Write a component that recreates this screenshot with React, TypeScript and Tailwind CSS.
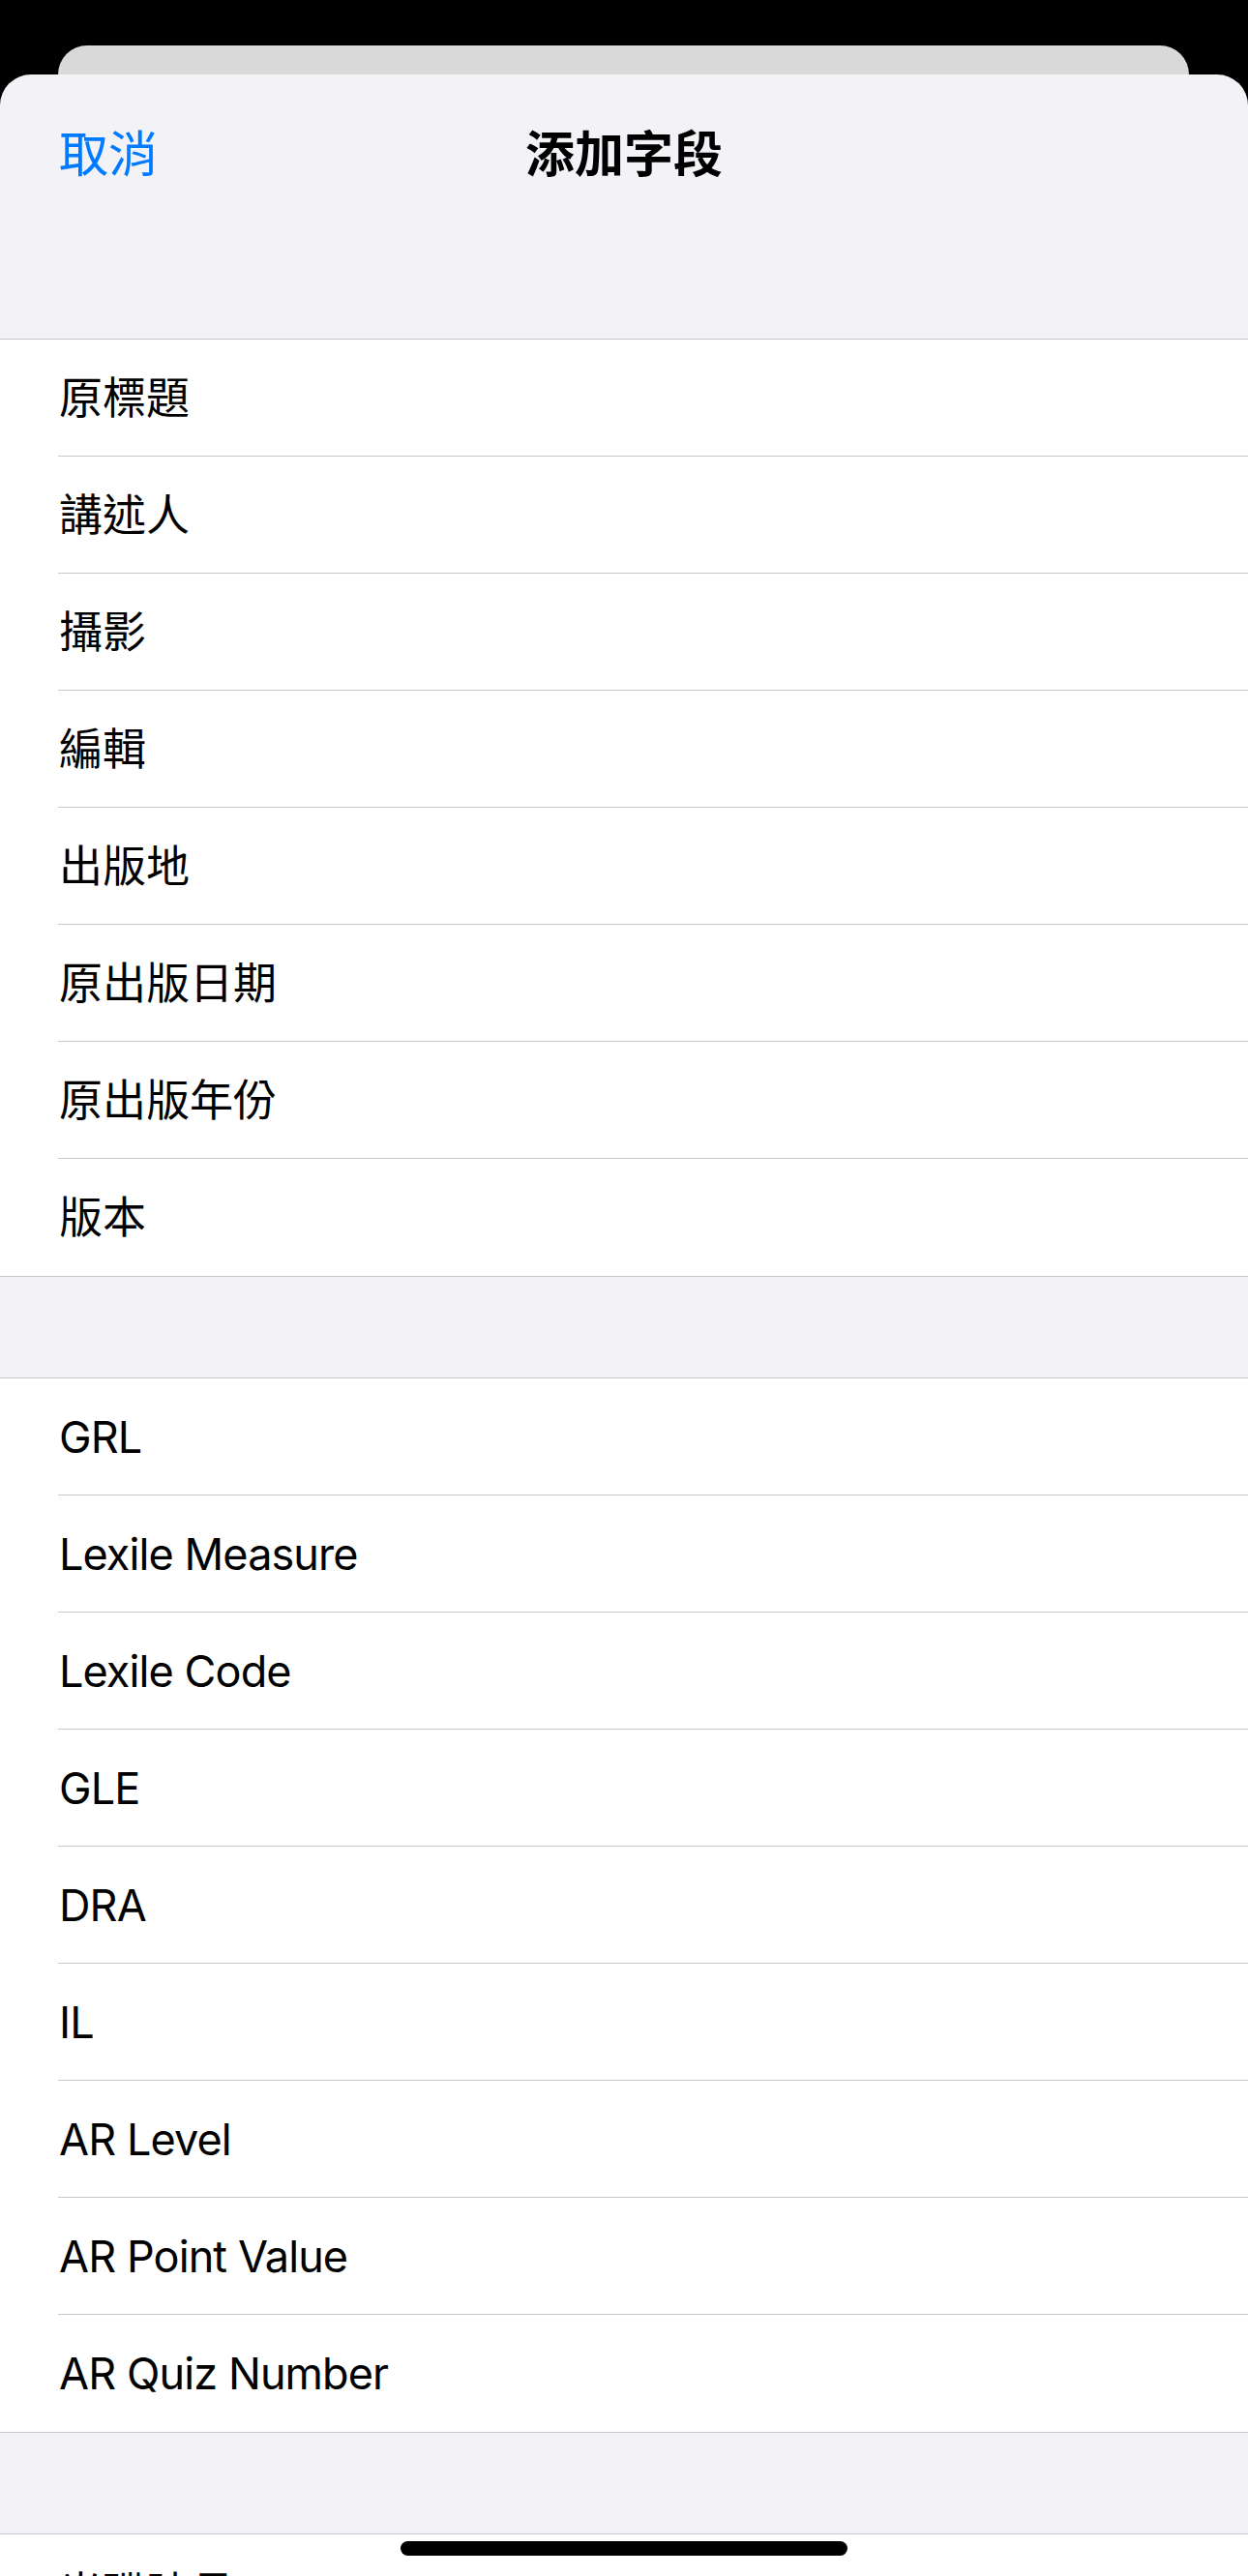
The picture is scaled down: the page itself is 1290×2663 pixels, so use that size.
const firstSection = ['原標題', '講述人', '攝影', '編輯', '出版地', '原出版日期', '原出版年份', '版本'];

const secondSection = [
  'GRL',
  'Lexile Measure',
  'Lexile Code',
  'GLE',
  'DRA',
  'IL',
  'AR Level',
  'AR Point Value',
  'AR Quiz Number',
];

const thirdSection = ['光碟時長'];

function FieldSection({ items }: { items: string[] }) {
  return (
    <div className="border-y border-[#c8c7cc] bg-white">
      {items.map((label, i) => {
        const latin = /^[\x20-\x7e]+$/.test(label);
        return (
          <div key={label} className="pl-[60px]">
            <div
              className={`flex h-[121px] items-center text-[45px] leading-none text-black ${
                i < items.length - 1 ? 'border-b border-[#c8c7cc]' : ''
              }`}
            >
              <span className={latin ? 'pl-[1px] tracking-[-0.9px]' : 'pl-[1px]'}>{label}</span>
            </div>
          </div>
        );
      })}
    </div>
  );
}

export default function App() {
  return (
    <div className="relative h-[2663px] w-[1290px] overflow-hidden bg-black font-['Inter','Noto_Sans_CJK_TC',sans-serif]">
      <div className="flex flex-col pt-[47px]">
        {/* stacked sheet behind */}
        <div className="ml-[60px] mr-[61px] h-[30px] rounded-t-[30px] bg-[#d9d9d9]" />

        <div className="rounded-t-[32px] bg-[#f2f2f7]">
          <div className="h-[273px]">
            <div className="relative flex h-[164px] items-center justify-center px-[60px]">
              <button className="absolute left-[61px] text-[51px] leading-none text-[#007aff]">取消</button>
              <h1 className="text-[51px] font-semibold leading-none text-black">添加字段</h1>
            </div>
          </div>

          <FieldSection items={firstSection} />
          <div className="h-[104px]" />
          <FieldSection items={secondSection} />
          <div className="h-[104px]" />
          <FieldSection items={thirdSection} />
        </div>
      </div>

      {/* home indicator */}
      <div className="absolute bottom-[21px] left-[414px] h-[15px] w-[462px] rounded-full bg-black" />
    </div>
  );
}
